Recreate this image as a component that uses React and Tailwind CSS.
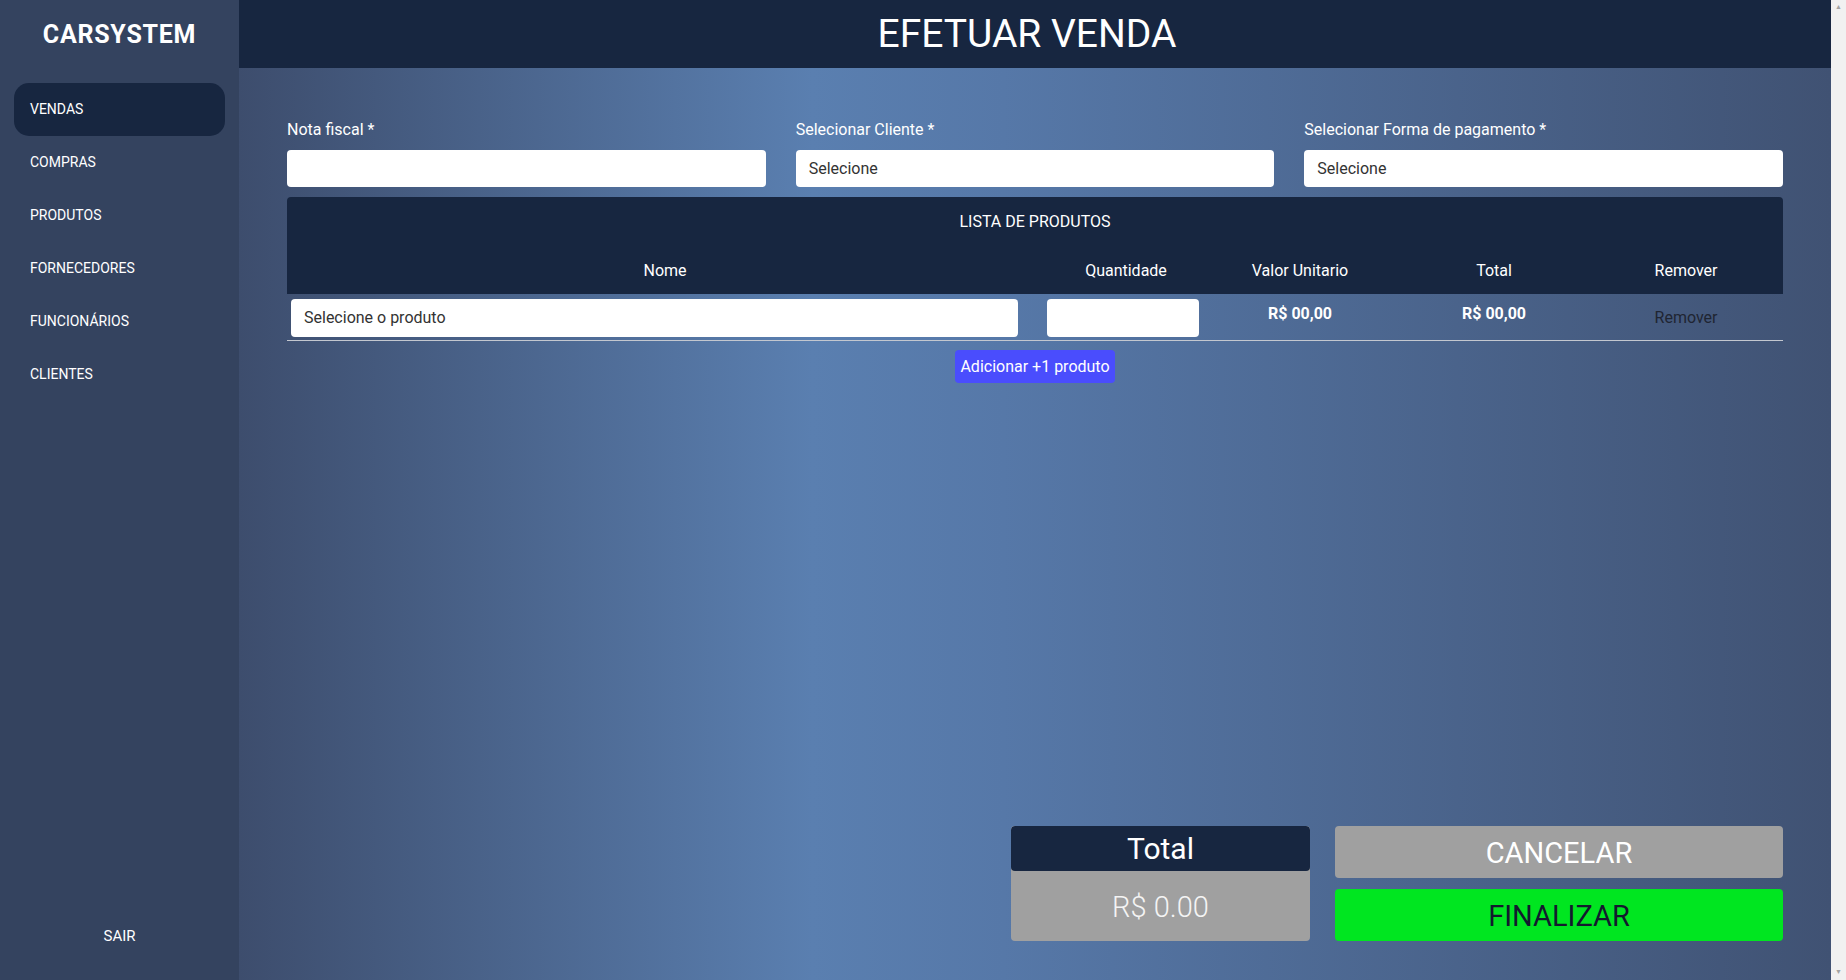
import { useState } from 'react'

const menu = ['VENDAS', 'COMPRAS', 'PRODUTOS', 'FORNECEDORES', 'FUNCIONÁRIOS', 'CLIENTES']

function Sidebar() {
  return (
    <aside className="w-[239px] shrink-0 h-full bg-[#34435f] flex flex-col text-white">
      <h1 className="text-center text-[25px] font-bold tracking-[0.03em] leading-none pt-[22px]">CARSYSTEM</h1>
      <nav className="mt-[36px] px-[14px] flex flex-col">
        {menu.map((item, i) => (
          <a
            key={item}
            className={`h-[53px] flex items-center pl-4 text-[14px] rounded-[15px] ${i === 0 ? 'bg-[#172640]' : ''}`}
          >
            {item}
          </a>
        ))}
      </nav>
      <div className="mt-auto mb-[33px] text-center text-[15px]">SAIR</div>
    </aside>
  )
}

// faixa da barra de rolagem do navegador
function ScrollTrack() {
  return (
    <div className="w-[15px] shrink-0 h-full bg-[#f1f1f1] flex flex-col items-center justify-between py-[4px] text-[7px] leading-none text-[#a3a3a3]">
      <span>▲</span>
      <span>▼</span>
    </div>
  )
}

function App() {
  const [nota, setNota] = useState('')

  return (
    <div className="flex h-screen font-['Roboto',sans-serif] bg-[#34435f]">
      <Sidebar />

      <main className="flex-1 flex flex-col h-full bg-[linear-gradient(to_right,#3d4d6d_0%,#5a7fb0_36%,#5678a8_48%,#405273_100%)]">
        <header className="h-[68px] shrink-0 bg-[#172640] flex items-center justify-center pr-[16px]">
          <h2 className="text-white text-[39px] leading-none">EFETUAR VENDA</h2>
        </header>

        <div className="flex-1 flex flex-col px-[48px] pt-[50px] pb-[39px]">
          {/* campos do topo */}
          <div className="grid grid-cols-3 gap-x-[30px]">
            <div>
              <label className="block text-white text-[16px] leading-6 mb-2">Nota fiscal *</label>
              <input
                value={nota}
                onChange={(e) => setNota(e.target.value)}
                className="w-full h-[37px] rounded bg-white px-[13px] text-[16px] text-[#333] outline-none"
              />
            </div>
            <div>
              <label className="block text-white text-[16px] leading-6 mb-2">Selecionar Cliente *</label>
              <div className="h-[37px] rounded bg-white px-[13px] flex items-center text-[16px] text-[#333]">Selecione</div>
            </div>
            <div>
              <label className="block text-white text-[16px] leading-6 mb-2">Selecionar Forma de pagamento *</label>
              <div className="h-[37px] rounded bg-white px-[13px] flex items-center text-[16px] text-[#333]">Selecione</div>
            </div>
          </div>

          {/* lista de produtos */}
          <div className="mt-[10px]">
            <div className="bg-[#172640] rounded-t text-white h-[97px] flex flex-col">
              <div className="text-center text-[16px] pt-[13px]">LISTA DE PRODUTOS</div>
              <div className="grid grid-cols-[756px_166px_182px_206px_1fr] mt-auto pb-[11px] text-[16px] text-center">
                <span>Nome</span>
                <span>Quantidade</span>
                <span>Valor Unitario</span>
                <span>Total</span>
                <span className="pr-[8px]">Remover</span>
              </div>
            </div>
            <div className="grid grid-cols-[756px_166px_182px_206px_1fr] items-start h-[47px] border-b border-[#c3c7cf] pt-[5px] text-center">
              <div className="px-[4px]">
                <div className="w-[727px] h-[38px] rounded bg-white pl-[13px] flex items-center text-[16px] text-[#333] text-left">Selecione o produto</div>
              </div>
              <div className="px-[4px]">
                <div className="w-[152px] h-[38px] rounded bg-white"></div>
              </div>
              <span className="text-white font-bold text-[16px] pt-[3px]">R$ 00,00</span>
              <span className="text-white font-bold text-[16px] pt-[3px]">R$ 00,00</span>
              <span className="text-[#1f2532] text-[16px] pt-[7px] pr-[8px]">Remover</span>
            </div>
            <div className="flex justify-center mt-[9px]">
              <button className="h-[33px] w-[160px] rounded bg-[#4a4dfd] text-white text-[16px]">Adicionar +1 produto</button>
            </div>
          </div>

          {/* rodapé */}
          <div className="mt-auto flex justify-end gap-[25px]">
            <div className="w-[299px] h-[115px] rounded bg-[#a0a0a0] flex flex-col overflow-hidden">
              <div className="h-[45px] bg-[#172640] rounded flex items-center justify-center text-white text-[30px]">Total</div>
              <div className="flex-1 flex items-center justify-center pt-[3px] text-[#f4f4f4] text-[29px] font-light">R$ 0.00</div>
            </div>
            <div className="w-[448px] flex flex-col gap-[11px]">
              <button className="h-[52px] rounded bg-[#a0a0a0] text-white text-[29px] pt-[3px]">CANCELAR</button>
              <button className="h-[52px] rounded bg-[#00e620] text-[#131a2e] text-[29px] pt-[3px]">FINALIZAR</button>
            </div>
          </div>
        </div>
      </main>

      <ScrollTrack />
    </div>
  )
}

export default App
